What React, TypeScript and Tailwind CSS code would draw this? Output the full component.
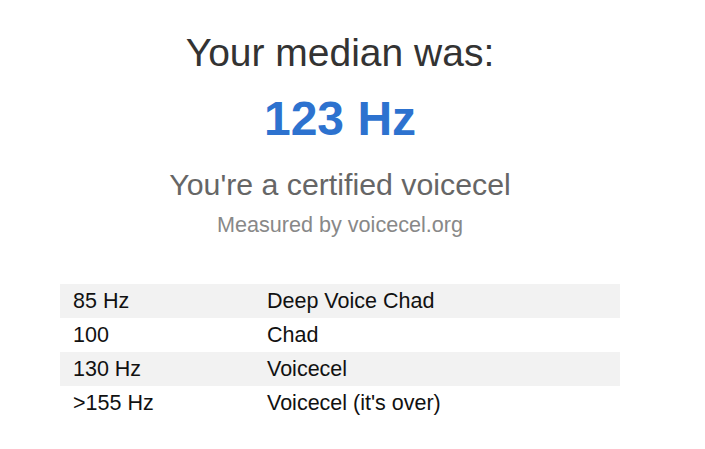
const rows = [
  { hz: "85 Hz", label: "Deep Voice Chad" },
  { hz: "100", label: "Chad" },
  { hz: "130 Hz", label: "Voicecel" },
  { hz: ">155 Hz", label: "Voicecel (it's over)" },
];

export default function App() {
  return (
    <div className="min-h-screen w-full bg-white font-['Liberation_Sans',Arial,sans-serif]">
      <div className="w-[680px] flex flex-col items-center pt-[31px]">
        <h1 className="text-[39px] leading-[44px] text-[#333]">Your median was:</h1>
        <p className="mt-[18px] text-[48px] leading-[52px] font-bold text-[#2d72cf]">123 Hz</p>
        <p className="mt-[23px] text-[30.3px] leading-[34px] text-[#666]">You're a certified voicecel</p>
        <p className="mt-[10px] text-[21.6px] leading-[26px] text-[#888]">Measured by voicecel.org</p>

        {/* Reference table */}
        <div className="mt-[46px] w-[560px] flex flex-col">
          {rows.map((r, i) => (
            <div
              key={r.hz}
              className={`flex h-[34px] items-center text-[21.5px] leading-[34px] text-[#111] ${
                i % 2 === 0 ? "bg-[#f2f2f2]" : "bg-white"
              }`}
            >
              <span className="w-[194px] pl-[13px]">{r.hz}</span>
              <span className="pl-[13px]">{r.label}</span>
            </div>
          ))}
        </div>
      </div>
    </div>
  );
}
